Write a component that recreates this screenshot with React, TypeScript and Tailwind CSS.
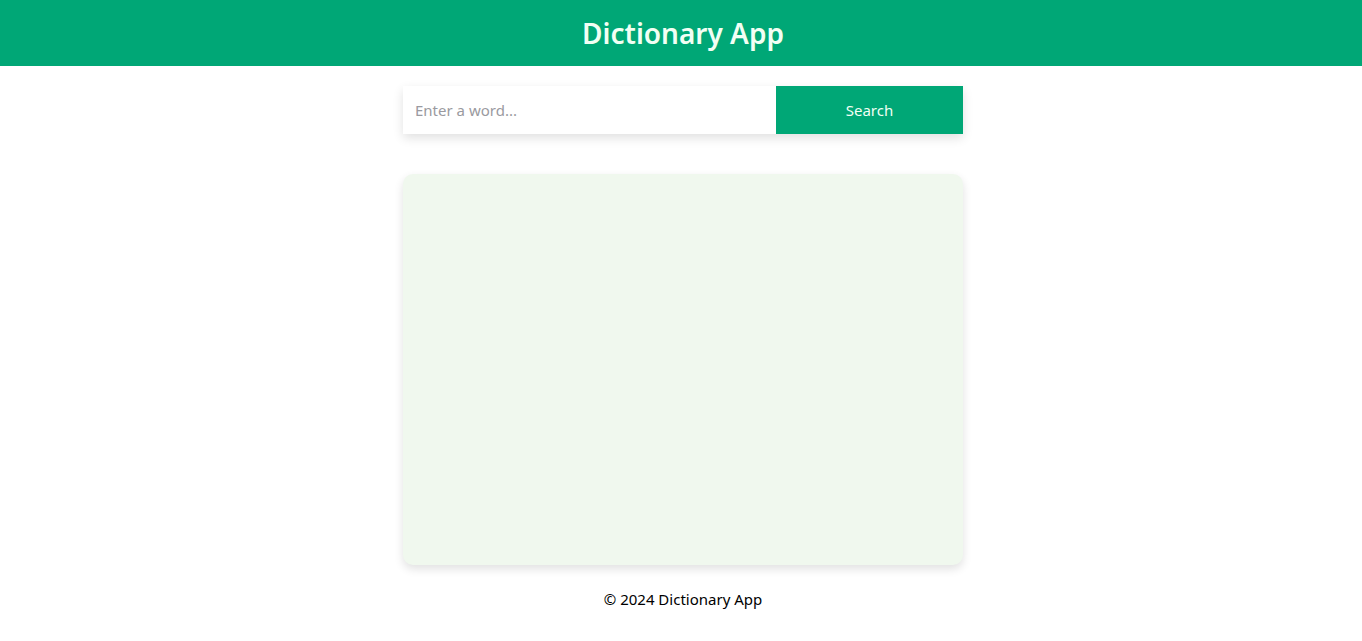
const App = () => {
  return (
    <div className="min-h-screen bg-white font-['Noto_Sans',sans-serif] text-black">
      <header className="h-[66px] pl-1 bg-[#00a776] flex items-center justify-center">
        <h1 className="text-[28px] font-semibold text-[#f2fff4] leading-none">Dictionary App</h1>
      </header>

      <main className="pl-1">
        <div className="w-[560px] mx-auto">
          <div className="mt-5 flex h-12 shadow-[0_4px_10px_rgba(0,0,0,0.12)]">
            <input
              type="text"
              placeholder="Enter a word..."
              className="w-[373px] h-full px-3 text-[15px] bg-white outline-none placeholder:text-[#9a9aa0]"
            />
            <button className="flex-1 h-full bg-[#00a776] text-[15px] text-[#f2fff4]">Search</button>
          </div>

          <div className="mt-10 h-[391px] rounded-[10px] bg-[#f0f8ee] shadow-[0_4px_10px_rgba(0,0,0,0.12)]"></div>
        </div>
      </main>

      <footer className="pl-1 pt-[23px] text-center">
        <p className="text-[15px]">&copy; 2024 Dictionary App</p>
      </footer>
    </div>
  );
};

export default App;
